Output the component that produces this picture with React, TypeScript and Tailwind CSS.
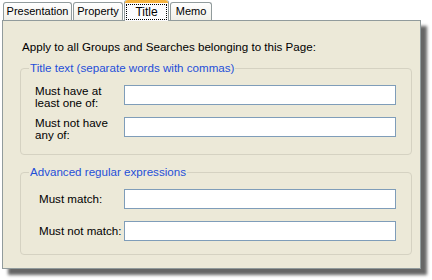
const tabs = [
  { label: 'Presentation', w: 'w-[69px]' },
  { label: 'Property', w: 'w-[50px]' },
  { label: 'Title', w: 'w-[45px]', active: true },
  { label: 'Memo', w: 'w-[42px]' },
];

function Tab({ label, w, active }: { label: string; w: string; active?: boolean }) {
  if (active) {
    return (
      <div
        className={`${w} relative z-10 -mb-px flex h-[21px] flex-col rounded-t-[3px] border-x border-[#919b9c] bg-[#fcfcfe]`}
      >
        <div className="h-[3px] rounded-t-[3px] bg-[#f5b23d]" />
        <div className="flex flex-1 items-start justify-center pt-px">
          <span className="border border-dotted border-black px-[8px] text-[12px] leading-[14px]">{label}</span>
        </div>
      </div>
    );
  }
  return (
    <div
      className={`${w} flex h-[18px] items-center justify-center rounded-t-[3px] border-x border-t border-[#919b9c] bg-gradient-to-b from-white to-[#f0efe8]`}
    >
      {label}
    </div>
  );
}

function Field({
  label,
  indent,
  align = 'items-center',
}: {
  label: React.ReactNode;
  indent: string;
  align?: string;
}) {
  return (
    <div className={`flex ${align}`}>
      <div className={`${indent} w-[95px] shrink-0 leading-[12px]`}>{label}</div>
      <div className="h-[20px] w-[272px] border border-[#7f9db9] bg-white" />
    </div>
  );
}

export default function App() {
  return (
    <div
      className="h-[280px] w-[432px] bg-white text-[11px] text-black"
      style={{ fontFamily: '"Liberation Sans", Arial, sans-serif' }}
    >
      <div className="ml-[2px] w-[419px]">
        {/* tab strip */}
        <div className="flex h-[20px] items-end gap-px pl-px">
          {tabs.map((t) => (
            <Tab key={t.label} {...t} />
          ))}
        </div>

        {/* page */}
        <div className="h-[249px] border border-[#919b9c] bg-[#ece9d8] text-[11.6px] shadow-[6px_6px_3px_rgba(0,0,0,0.6)]">
          <p className="pl-[19px] pt-[19px] leading-[14px]">
            Apply to all Groups and Searches belonging to this Page:
          </p>

          <fieldset className="ml-[17px] mr-[8px] mt-[7px] h-[94px] rounded-[4px] border border-[#d5d2c2] px-[8px]">
            <legend className="px-px leading-[14px] text-[#1f4fd8]">
              Title text (separate words with commas)
            </legend>
            <div className="mt-[10px] flex flex-col gap-[8px]">
              <Field
                indent="pl-[6px]"
                align="items-start"
                label={
                  <>
                    Must have at
                    <br />
                    least one of:
                  </>
                }
              />
              <Field
                indent="pl-[6px]"
                align="items-start"
                label={
                  <>
                    Must not have
                    <br />
                    any of:
                  </>
                }
              />
            </div>
          </fieldset>

          <fieldset className="ml-[17px] mr-[8px] mt-[10px] h-[90px] rounded-[4px] border border-[#d5d2c2] px-[8px]">
            <legend className="px-px leading-[14px] text-[#1f4fd8]">Advanced regular expressions</legend>
            <div className="mt-[10px] flex flex-col gap-[12px]">
              <Field indent="pl-[10px]" label="Must match:" />
              <Field indent="pl-[10px]" label="Must not match:" />
            </div>
          </fieldset>
        </div>
      </div>
    </div>
  );
}
